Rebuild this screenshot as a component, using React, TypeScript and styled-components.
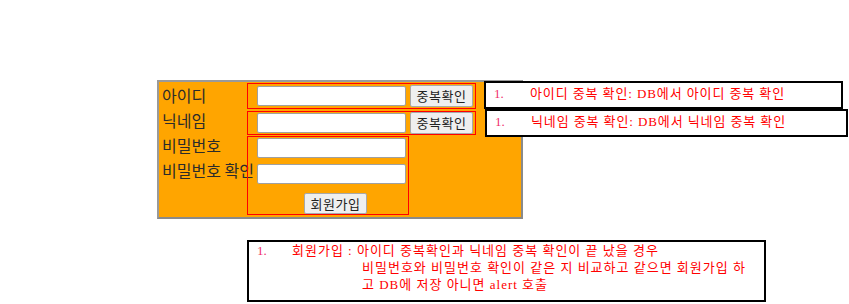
import styled, { createGlobalStyle } from 'styled-components';

const GlobalStyle = createGlobalStyle`
  body {
    margin: 0;
    background: #ffffff;
    font-family: 'Noto Sans CJK KR', 'Noto Sans', sans-serif;
  }
`;

const labels = ['아이디', '닉네임', '비밀번호', '비밀번호 확인'];

function App() {
  return (
    <PageDiv>
      <GlobalStyle />
      <TopAreaDiv>
        <PanelDiv>
          <LabelColumnDiv>
            {labels.map((label) => (
              <LabelDiv key={label}>{label}</LabelDiv>
            ))}
          </LabelColumnDiv>
          <FieldColumnDiv>
            <CheckBoxDiv $height={26}>
              <FieldInput />
              <FormButton>중복확인</FormButton>
            </CheckBoxDiv>
            <CheckBoxDiv $height={24} $gapTop={2}>
              <FieldInput />
              <FormButton>중복확인</FormButton>
            </CheckBoxDiv>
            <PasswordBoxDiv>
              <FieldInput type='password' />
              <FieldInput type='password' />
              <SubmitButton>회원가입</SubmitButton>
            </PasswordBoxDiv>
          </FieldColumnDiv>
        </PanelDiv>

        <NotesDiv>
          <NoteDiv $width={359}>
            <Marker $width={36}>1.</Marker>
            <span>아이디 중복 확인: DB에서 아이디 중복 확인</span>
          </NoteDiv>
          <NoteDiv $width={363} $shift={1}>
            <Marker $width={36}>1.</Marker>
            <span>닉네임 중복 확인: DB에서 닉네임 중복 확인</span>
          </NoteDiv>
        </NotesDiv>
      </TopAreaDiv>

      <SummaryDiv>
        <SummaryLine>
          <Marker $width={35}>1.</Marker>
          <span>회원가입 : 아이디 중복확인과 닉네임 중복 확인이 끝 났을 경우</span>
        </SummaryLine>
        <SummaryLine $indent>
          비밀번호와 비밀번호 확인이 같은 지 비교하고 같으면 회원가입 하
        </SummaryLine>
        <SummaryLine $indent>고 DB에 저장 아니면 alert 호출</SummaryLine>
      </SummaryDiv>
    </PageDiv>
  );
}

const PageDiv = styled.div`
  display: flex;
  flex-direction: column;
  align-items: flex-start;
  padding: 80px 0 0 157px;
`;

const TopAreaDiv = styled.div`
  position: relative;
  width: 692px;
`;

const PanelDiv = styled.div`
  display: flex;
  flex-direction: row;
  width: 366px;
  height: 139px;
  box-sizing: border-box;
  background-color: #ffa500;
  border: 2px solid #9a9a9a;
  border-right-color: #8a8a8a;
  border-bottom-color: #8a8a8a;
`;

const LabelColumnDiv = styled.div`
  display: flex;
  flex-direction: column;
  width: 88px;
  flex-shrink: 0;
  padding: 1px 0 0 3px;
  box-sizing: border-box;
`;

const LabelDiv = styled.div`
  height: 25px;
  line-height: 25px;
  font-size: 16px;
  color: #2b2b2b;
  white-space: nowrap;
`;

const FieldColumnDiv = styled.div`
  display: flex;
  flex-direction: column;
  padding-top: 1px;
`;

const CheckBoxDiv = styled.div<{ $height: number; $gapTop?: number }>`
  display: flex;
  flex-direction: row;
  align-items: center;
  gap: 4px;
  width: 229px;
  height: ${(p) => p.$height}px;
  margin-top: ${(p) => p.$gapTop ?? 0}px;
  box-sizing: border-box;
  padding-left: 9px;
  border: 1px solid #ff0000;
`;

const PasswordBoxDiv = styled.div`
  display: flex;
  flex-direction: column;
  align-items: flex-start;
  gap: 6px;
  width: 162px;
  height: 79px;
  margin-top: 1px;
  box-sizing: border-box;
  padding: 1px 0 0 9px;
  border: 1px solid #ff0000;
`;

const FieldInput = styled.input`
  width: 149px;
  height: 20px;
  box-sizing: border-box;
  margin: 0;
  padding: 1px 2px;
  border: 1px solid #a0a0a0;
  border-radius: 2px;
  background: #ffffff;
  font-size: 13px;
`;

const FormButton = styled.button`
  width: 63px;
  height: 22px;
  box-sizing: border-box;
  margin: 0;
  padding: 0;
  border: 1px solid #a8a8a8;
  border-radius: 2px;
  background-color: #efefef;
  color: #222;
  font-family: 'Noto Sans CJK KR', sans-serif;
  font-size: 13px;
  letter-spacing: 0.5px;
  line-height: 20px;
  cursor: pointer;

  &:hover {
    background-color: #e5e5e5;
  }
`;

const SubmitButton = styled(FormButton)`
  height: 21px;
  margin: 3px 0 0 47px;
`;

const NotesDiv = styled.div`
  position: absolute;
  left: 327px;
  top: 1px;
  display: flex;
  flex-direction: column;
`;

const NoteDiv = styled.div<{ $width: number; $shift?: number }>`
  display: flex;
  flex-direction: row;
  width: ${(p) => p.$width}px;
  height: 28px;
  box-sizing: border-box;
  margin-left: ${(p) => p.$shift ?? 0}px;
  padding: 2px 0 0 8px;
  background: #ffffff;
  border: 2px solid #000000;
  color: #ff0000;
  font-family: 'Liberation Serif', 'Noto Sans CJK KR', serif;
  font-size: 13px;
  letter-spacing: 0.9px;
  line-height: 17px;
  white-space: nowrap;
`;

const Marker = styled.span<{ $width: number }>`
  display: inline-block;
  width: ${(p) => p.$width}px;
  flex-shrink: 0;
  color: #f0306a;
  letter-spacing: 0;
`;

const SummaryDiv = styled.div`
  display: flex;
  flex-direction: column;
  width: 519px;
  height: 62px;
  box-sizing: border-box;
  margin: 21px 0 0 90px;
  padding: 0 0 0 8px;
  border: 2px solid #000000;
  color: #ff0000;
  font-family: 'Liberation Serif', 'Noto Sans CJK KR', serif;
  font-size: 13px;
  letter-spacing: 1px;
  line-height: 17px;
  white-space: nowrap;
`;

const SummaryLine = styled.div<{ $indent?: boolean }>`
  display: flex;
  flex-direction: row;
  padding-left: ${(p) => (p.$indent ? 105 : 0)}px;
`;

export default App;
